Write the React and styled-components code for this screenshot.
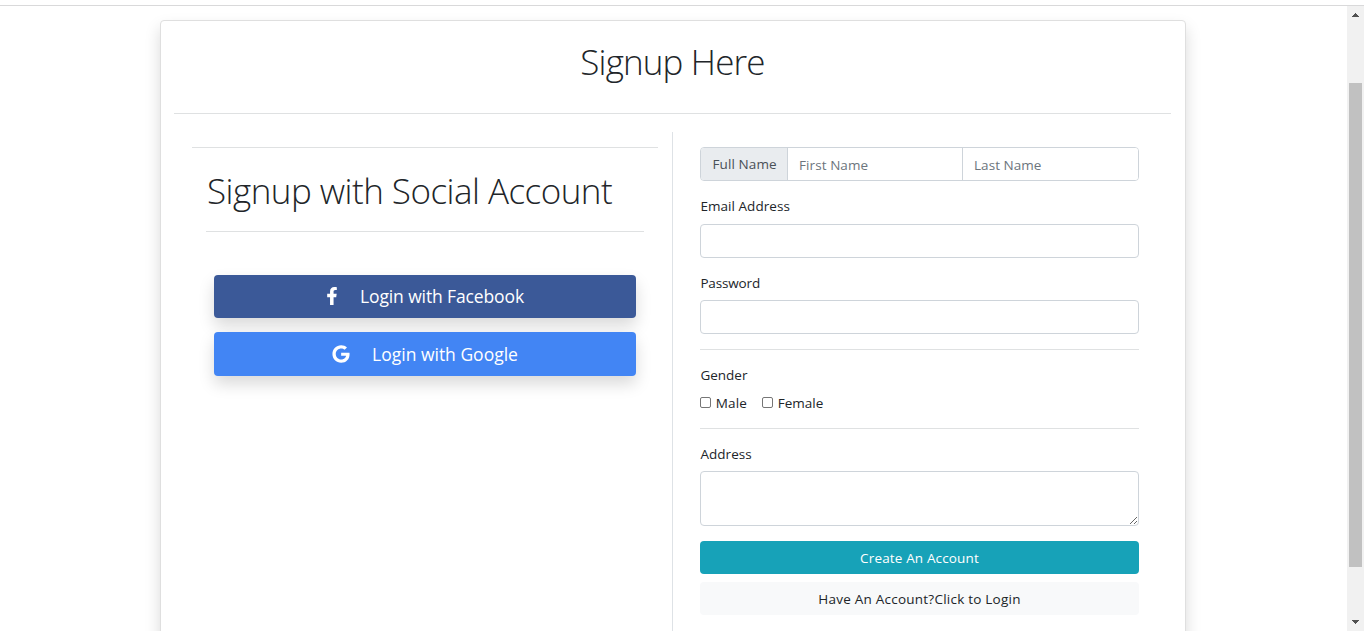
import React from "react";
import styled, { createGlobalStyle } from "styled-components";
import { FaFacebookF, FaGoogle } from "react-icons/fa";

const GlobalStyle = createGlobalStyle`
  *, *::before, *::after { box-sizing: border-box; }
  html, body { margin: 0; height: 100%; overflow: hidden; background: #fff; }
  body {
    font-family: "Segoe UI", "Open Sans", "Noto Sans", sans-serif;
    font-size: 13.5px;
    line-height: 20px;
    color: #212529;
  }
`;

const Page = styled.div`
  height: 100vh;
  padding-top: 5px;
  overflow: hidden;
`;

const Viewport = styled.div`
  display: flex;
  height: 100%;
  border-top: 1px solid #d9d9da;
`;

const Content = styled.main`
  flex: 1;
  height: 100%;
  padding: 14px 161px 0 160px;
  overflow: hidden;
`;

const Card = styled.section`
  height: 760px;
  padding: 0 14px 0 13px;
  border: 1px solid #dfdfdf;
  border-radius: 4px;
  background: #fff;
  box-shadow: 0 8px 16px rgba(0, 0, 0, 0.15);
`;

const CardTitle = styled.h1`
  margin: 0;
  height: 93px;
  padding-top: 17px;
  border-bottom: 1px solid #dfe1e2;
  font-size: 35px;
  font-weight: 300;
  line-height: 48px;
  letter-spacing: ${(p) => p.$spacing}px;
  text-align: center;
`;

const Columns = styled.div`
  display: flex;
  margin-top: 18px;
  height: 620px;
`;

const SocialColumn = styled.div`
  width: 499px;
  padding: 15px 14px 0 18px;
  border-right: 1px solid #dee2e6;
`;

const SocialPanel = styled.div`
  border-top: 1px solid #dfe1e2;
  padding: 0 14px;
`;

const SocialTitle = styled.h2`
  margin: 0 0 43px;
  height: 84px;
  padding: 19px 0 0 1px;
  border-bottom: 1px solid #dfe1e2;
  font-size: 35px;
  font-weight: 300;
  line-height: 48px;
  letter-spacing: ${(p) => p.$spacing}px;
  white-space: nowrap;
`;

const SocialButton = styled.button`
  display: flex;
  align-items: center;
  justify-content: center;
  gap: ${(p) => p.$gap}px;
  width: 422px;
  height: ${(p) => p.$height}px;
  margin: 0 8px 14px;
  padding: 0 ${(p) => p.$end || 0}px 1px 0;
  border: 0;
  border-radius: 4px;
  background: ${(p) => p.$color};
  box-shadow: 0 8px 16px rgba(0, 0, 0, 0.15);
  color: #fff;
  font: 400 17.5px/24px "Segoe UI", "Open Sans", "Noto Sans", sans-serif;
  letter-spacing: ${(p) => p.$spacing}px;
`;

const Form = styled.form`
  display: flex;
  flex-direction: column;
  width: 439px;
  margin: 15px 0 0 27px;
`;

const NameGroup = styled.div`
  display: flex;
  height: 34px;
  border: 1px solid #ced4da;
  border-radius: 4px;
  overflow: hidden;
`;

const Addon = styled.span`
  width: 87px;
  padding: 6px 0 0 11.5px;
  border-right: 1px solid #ced4da;
  background: #e9ecef;
  color: #495057;
  line-height: 20px;
  letter-spacing: 0.1px;
  white-space: nowrap;
`;

const NameInput = styled.input`
  width: ${(p) => p.$width}px;
  padding: 2px 11px 0;
  border: 0;
  border-right: ${(p) => (p.$divided ? "1px solid #ced4da" : "0")};
  outline: 0;
  font: inherit;
  letter-spacing: ${(p) => p.$spacing}px;
  &::placeholder { color: #6c757d; opacity: 1; }
`;

const Label = styled.label`
  height: 20px;
  margin-top: ${(p) => p.$top}px;
  padding-left: 0.4px;
  line-height: 20px;
  letter-spacing: ${(p) => p.$spacing}px;
`;

const TextInput = styled.input`
  height: 34px;
  margin-top: ${(p) => p.$top}px;
  padding: 0 12px;
  border: 1px solid #ced4da;
  border-radius: 4px;
  font: inherit;
`;

const Rule = styled.hr`
  width: 100%;
  height: 1px;
  margin: ${(p) => p.$top}px 0 0;
  border: 0;
  background: #dfe1e2;
`;

const Choices = styled.div`
  display: flex;
  gap: 14px;
  height: 20px;
  margin-top: 8px;
`;

const Choice = styled.label`
  display: flex;
  align-items: center;
  width: ${(p) => p.$width}px;
  letter-spacing: ${(p) => p.$spacing}px;
  white-space: nowrap;
`;

const Checkbox = styled.input`
  flex: none;
  appearance: none;
  width: 11px;
  height: 11px;
  margin: 0 4.7px 1px 0;
  border: 1px solid #767676;
  border-radius: 2px;
  background: #fff;
`;

const AddressInput = styled.textarea`
  height: 55px;
  margin: 7px 0 0;
  padding: 6px 12px;
  border: 1px solid #ced4da;
  border-radius: 4px;
  font: inherit;
  resize: vertical;
`;

const FormButton = styled.button`
  height: 33px;
  margin-top: ${(p) => p.$top}px;
  padding: 1px 0 0;
  border: 0;
  border-radius: 4px;
  background: ${(p) => p.$background};
  color: ${(p) => p.$color};
  font: inherit;
  letter-spacing: ${(p) => p.$spacing}px;
`;

const ScrollTrack = styled.div`
  display: flex;
  flex-direction: column;
  align-items: center;
  width: 17px;
  height: 100%;
  padding: 7px 2px;
  background: #f1f1f1;
`;

const ScrollThumb = styled.div`
  width: 13px;
  height: 484px;
  margin: 66px 0 53px;
  background: #c1c1c1;
`;

const Arrow = styled.svg`
  display: block;
  flex: none;
  width: 7px;
  height: 4px;
  fill: #505050;
`;

export default function App() {
  return (
    <>
      <GlobalStyle />
      <Page>
        <Viewport>
          <Content>
            <Card>
              <CardTitle $spacing={-0.85}>Signup Here</CardTitle>
              <Columns>
                <SocialColumn>
                  <SocialPanel>
                    <SocialTitle $spacing={-0.52}>Signup with Social Account</SocialTitle>
                    <SocialButton $color="#3b5998" $height={43} $gap={19} $end={3} $spacing={-0.12}>
                      <FaFacebookF size={18} />
                      <span>Login with Facebook</span>
                    </SocialButton>
                    <SocialButton $color="#4285f4" $height={44} $gap={22} $spacing={0}>
                      <FaGoogle size={18} />
                      <span>Login with Google</span>
                    </SocialButton>
                  </SocialPanel>
                </SocialColumn>
                <Form>
                  <NameGroup>
                    <Addon>Full Name</Addon>
                    <NameInput $width={175} $divided $spacing={0.08} placeholder="First Name" />
                    <NameInput $width={175} $spacing={0.05} placeholder="Last Name" />
                  </NameGroup>
                  <Label $top={15} $spacing={0.05}>Email Address</Label>
                  <TextInput $top={8} type="email" />
                  <Label $top={15} $spacing={-0.15}>Password</Label>
                  <TextInput $top={7} type="password" />
                  <Rule $top={15} />
                  <Label as="div" $top={15} $spacing={0}>Gender</Label>
                  <Choices>
                    <Choice $width={48} $spacing={0.2}><Checkbox type="checkbox" />Male</Choice>
                    <Choice $width={62} $spacing={0}><Checkbox type="checkbox" />Female</Choice>
                  </Choices>
                  <Rule $top={15} />
                  <Label $top={15} $spacing={0.05}>Address</Label>
                  <AddressInput />
                  <FormButton type="button" $top={15} $background="#17a2b8" $color="#fff" $spacing={0.15}>
                    Create An Account
                  </FormButton>
                  <FormButton type="button" $top={8} $background="#f8f9fa" $color="#212529" $spacing={0.23}>
                    Have An Account?Click to Login
                  </FormButton>
                </Form>
              </Columns>
            </Card>
          </Content>
          <ScrollTrack>
            <Arrow viewBox="0 0 7 4" shapeRendering="crispEdges"><path d="M3 0h1v1h1v1h1v1h1v1H0V3h1V2h1V1h1z" /></Arrow>
            <ScrollThumb />
            <Arrow viewBox="0 0 7 4" shapeRendering="crispEdges"><path d="M0 0h7v1H6v1H5v1H4v1H3V3H2V2H1V1H0z" /></Arrow>
          </ScrollTrack>
        </Viewport>
      </Page>
    </>
  );
}
